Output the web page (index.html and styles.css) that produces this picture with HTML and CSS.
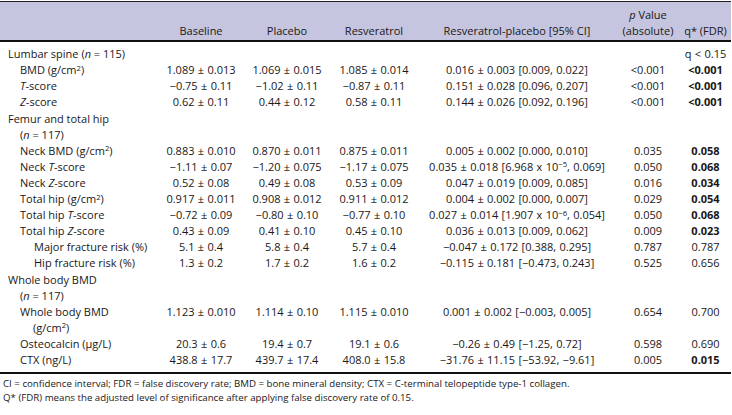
FILE: index.html
```html
<!DOCTYPE html>
<html>
<head>
<meta charset="utf-8">
<link rel="stylesheet" href="styles.css">
</head>
<body>
<table class="data">
  <colgroup>
    <col class="c-label"><col class="c-base"><col class="c-plac"><col class="c-resv"><col class="c-diff"><col class="c-p"><col class="c-q">
  </colgroup>
  <thead>
    <tr>
      <th class="lbl"></th>
      <th>Baseline</th>
      <th>Placebo</th>
      <th>Resveratrol</th>
      <th>Resveratrol-placebo [95% CI]</th>
      <th><i>p</i> Value<br>(absolute)</th>
      <th>q* (FDR)</th>
    </tr>
  </thead>
  <tbody>
    <tr class="first"><td class="lbl l0">Lumbar spine (<i>n</i> = 115)</td><td></td><td></td><td></td><td></td><td></td><td>q &lt; 0.15</td></tr>
    <tr><td class="lbl l1">BMD (g/cm<sup>2</sup>)</td><td>1.089 ± 0.013</td><td>1.069 ± 0.015</td><td>1.085 ± 0.014</td><td>0.016 ± 0.003 [0.009, 0.022]</td><td>&lt;0.001</td><td class="b">&lt;0.001</td></tr>
    <tr><td class="lbl l1"><i>T</i>-score</td><td>−0.75 ± 0.11</td><td>−1.02 ± 0.11</td><td>−0.87 ± 0.11</td><td>0.151 ± 0.028 [0.096, 0.207]</td><td>&lt;0.001</td><td class="b">&lt;0.001</td></tr>
    <tr><td class="lbl l1"><i>Z</i>-score</td><td>0.62 ± 0.11</td><td>0.44 ± 0.12</td><td>0.58 ± 0.11</td><td>0.144 ± 0.026 [0.092, 0.196]</td><td>&lt;0.001</td><td class="b">&lt;0.001</td></tr>
    <tr><td class="lbl l0 hang">Femur and total hip<br>(<i>n</i> = 117)</td><td></td><td></td><td></td><td></td><td></td><td></td></tr>
    <tr><td class="lbl l1">Neck BMD (g/cm<sup>2</sup>)</td><td>0.883 ± 0.010</td><td>0.870 ± 0.011</td><td>0.875 ± 0.011</td><td>0.005 ± 0.002 [0.000, 0.010]</td><td>0.035</td><td class="b">0.058</td></tr>
    <tr><td class="lbl l1">Neck <i>T</i>-score</td><td>−1.11 ± 0.07</td><td>−1.20 ± 0.075</td><td>−1.17 ± 0.075</td><td>0.035 ± 0.018 [6.968 x 10<sup>−5</sup>, 0.069]</td><td>0.050</td><td class="b">0.068</td></tr>
    <tr><td class="lbl l1">Neck <i>Z</i>-score</td><td>0.52 ± 0.08</td><td>0.49 ± 0.08</td><td>0.53 ± 0.09</td><td>0.047 ± 0.019 [0.009, 0.085]</td><td>0.016</td><td class="b">0.034</td></tr>
    <tr><td class="lbl l1">Total hip (g/cm<sup>2</sup>)</td><td>0.917 ± 0.011</td><td>0.908 ± 0.012</td><td>0.911 ± 0.012</td><td>0.004 ± 0.002 [0.000, 0.007]</td><td>0.029</td><td class="b">0.054</td></tr>
    <tr><td class="lbl l1">Total hip <i>T</i>-score</td><td>−0.72 ± 0.09</td><td>−0.80 ± 0.10</td><td>−0.77 ± 0.10</td><td>0.027 ± 0.014 [1.907 x 10<sup>−6</sup>, 0.054]</td><td>0.050</td><td class="b">0.068</td></tr>
    <tr><td class="lbl l1">Total hip <i>Z</i>-score</td><td>0.43 ± 0.09</td><td>0.41 ± 0.10</td><td>0.45 ± 0.10</td><td>0.036 ± 0.013 [0.009, 0.062]</td><td>0.009</td><td class="b">0.023</td></tr>
    <tr><td class="lbl l2">Major fracture risk (%)</td><td>5.1 ± 0.4</td><td>5.8 ± 0.4</td><td>5.7 ± 0.4</td><td>−0.047 ± 0.172 [0.388, 0.295]</td><td>0.787</td><td>0.787</td></tr>
    <tr><td class="lbl l2">Hip fracture risk (%)</td><td>1.3 ± 0.2</td><td>1.7 ± 0.2</td><td>1.6 ± 0.2</td><td>−0.115 ± 0.181 [−0.473, 0.243]</td><td>0.525</td><td>0.656</td></tr>
    <tr><td class="lbl l0 hang">Whole body BMD<br>(<i>n</i> = 117)</td><td></td><td></td><td></td><td></td><td></td><td></td></tr>
    <tr><td class="lbl l1 hang">Whole body BMD<br>(g/cm<sup>2</sup>)</td><td>1.123 ± 0.010</td><td>1.114 ± 0.10</td><td>1.115 ± 0.010</td><td>0.001 ± 0.002 [−0.003, 0.005]</td><td>0.654</td><td>0.700</td></tr>
    <tr><td class="lbl l1">Osteocalcin (μg/L)</td><td>20.3 ± 0.6</td><td>19.4 ± 0.7</td><td>19.1 ± 0.6</td><td>−0.26 ± 0.49 [−1.25, 0.72]</td><td>0.598</td><td>0.690</td></tr>
    <tr class="last"><td class="lbl l1">CTX (ng/L)</td><td>438.8 ± 17.7</td><td>439.7 ± 17.4</td><td>408.0 ± 15.8</td><td>−31.76 ± 11.15 [−53.92, −9.61]</td><td>0.005</td><td class="b">0.015</td></tr>
  </tbody>
</table>
<div class="notes">
  <p>CI = confidence interval; FDR = false discovery rate; BMD = bone mineral density; CTX = C-terminal telopeptide type-1 collagen.</p>
  <p>Q* (FDR) means the adjusted level of significance after applying false discovery rate of 0.15.</p>
</div>
</body>
</html>
```
FILE: styles.css
```css
html, body {
  margin: 0;
  padding: 0;
  background: #ffffff;
}
body {
  font-family: "Open Sans", "Noto Sans", sans-serif;
  color: #1a1718;
  padding-top: 1px;
}
.data {
  width: 731px;
  border-collapse: collapse;
  table-layout: fixed;
  font-size: 11px;
  line-height: 16.1px;
}
.c-label { width: 158px; }
.c-base { width: 86px; }
.c-plac { width: 86px; }
.c-resv { width: 88px; }
.c-diff { width: 198px; }
.c-p { width: 64px; }
.c-q { width: 51px; }

.data thead th {
  background: #c5c5e0;
  font-weight: normal;
  text-align: center;
  vertical-align: bottom;
  padding: 5px 0 1px;
  white-space: nowrap;
  border-top: 1px solid #231f20;
  border-bottom: 2px solid #111111;
}
.data td {
  padding: 0;
  text-align: center;
  vertical-align: top;
  white-space: nowrap;
  word-spacing: 0.5px;
}
.data td.lbl {
  text-align: left;
  word-spacing: 0;
}
.l0 { padding-left: 8px !important; }
.l1 { padding-left: 20px !important; }
.l2 { padding-left: 34px !important; }
.l0.hang { padding-left: 20px !important; text-indent: -12px; }
.l1.hang { padding-left: 33px !important; text-indent: -13px; }
.data tr.first td { padding-top: 4px; }
.data tr.last td { padding-bottom: 4px; border-bottom: 2px solid #111111; }
.b { font-weight: bold; }
sup {
  font-size: 70%;
  line-height: 0;
  vertical-align: baseline;
  position: relative;
  top: -0.45em;
}
.notes {
  font-size: 9.7px;
  line-height: 14px;
  padding: 3px 0 0 3px;
}
.notes p {
  margin: 0;
}
```
